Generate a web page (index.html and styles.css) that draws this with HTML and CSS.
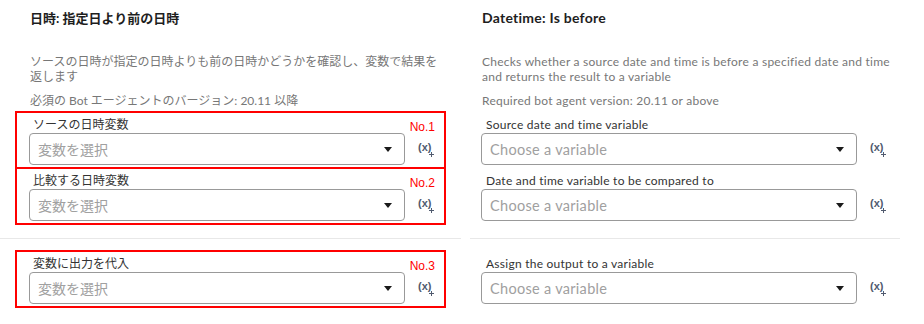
FILE: index.html
```html
<!DOCTYPE html>
<html lang="ja">
<head>
    <meta charset="UTF-8">
    <meta name="viewport" content="width=device-width, initial-scale=1.0">
    <title>Datetime: Is before</title>
    <link rel="stylesheet" href="styles.css">
</head>
<body>
    <div class="page">
        <!-- Japanese panel, annotated with red boxes -->
        <section class="panel panel-ja" lang="ja">
            <div class="panel-head">
                <h2 class="panel-title">日時: 指定日より前の日時</h2>
                <p class="panel-desc">ソースの日時が指定の日時よりも前の日時かどうかを確認し、変数で結果を返します</p>
                <p class="panel-note">必須の Bot エージェントのバージョン: 20.11 以降</p>
            </div>

            <div class="field field-marked">
                <span class="field-tag">No.1</span>
                <label class="field-label">ソースの日時変数</label>
                <div class="field-row">
                    <div class="select"><span class="select-placeholder">変数を選択</span><span class="select-caret"></span></div>
                    <span class="var-icon">(x)<span class="var-plus"></span></span>
                </div>
            </div>
            <div class="field field-marked field-joined">
                <span class="field-tag">No.2</span>
                <label class="field-label">比較する日時変数</label>
                <div class="field-row">
                    <div class="select"><span class="select-placeholder">変数を選択</span><span class="select-caret"></span></div>
                    <span class="var-icon">(x)<span class="var-plus"></span></span>
                </div>
            </div>

            <hr class="divider">

            <div class="field field-marked">
                <span class="field-tag">No.3</span>
                <label class="field-label">変数に出力を代入</label>
                <div class="field-row">
                    <div class="select"><span class="select-placeholder">変数を選択</span><span class="select-caret"></span></div>
                    <span class="var-icon">(x)<span class="var-plus"></span></span>
                </div>
            </div>
        </section>

        <!-- English panel -->
        <section class="panel panel-en" lang="en">
            <div class="panel-head">
                <h2 class="panel-title">Datetime: Is before</h2>
                <p class="panel-desc">Checks whether a source date and time is before a specified date and time and returns the result to a variable</p>
                <p class="panel-note">Required bot agent version: 20.11 or above</p>
            </div>

            <div class="field">
                <label class="field-label">Source date and time variable</label>
                <div class="field-row">
                    <div class="select"><span class="select-placeholder">Choose a variable</span><span class="select-caret"></span></div>
                    <span class="var-icon">(x)<span class="var-plus"></span></span>
                </div>
            </div>
            <div class="field field-joined">
                <label class="field-label">Date and time variable to be compared to</label>
                <div class="field-row">
                    <div class="select"><span class="select-placeholder">Choose a variable</span><span class="select-caret"></span></div>
                    <span class="var-icon">(x)<span class="var-plus"></span></span>
                </div>
            </div>

            <hr class="divider">

            <div class="field">
                <label class="field-label">Assign the output to a variable</label>
                <div class="field-row">
                    <div class="select"><span class="select-placeholder">Choose a variable</span><span class="select-caret"></span></div>
                    <span class="var-icon">(x)<span class="var-plus"></span></span>
                </div>
            </div>
        </section>
    </div>
</body>
</html>
```

FILE: styles.css
```css
body {
    margin: 0;
    background-color: #fff;
    font-family: Lato, "Noto Sans CJK JP", sans-serif;
    color: #333;
}
.page {
    display: flex;
}
.panel {
    width: 462px;
    box-sizing: border-box;
}
.panel-ja {
    padding-left: 15px;
}
.panel-en {
    padding-left: 5px;
}
.panel-en .panel-title,
.panel-en .panel-desc,
.panel-en .panel-note,
.panel-en .field-label {
    letter-spacing: 0.25px;
}
.panel-head {
    width: 431px;
    box-sizing: border-box;
    padding-left: 15px;
}
.panel-title {
    margin: 0;
    padding-top: 8px;
    font-size: 14px;
    line-height: 20px;
    font-weight: bold;
    color: #1e1e1e;
}
.panel-ja .panel-title {
    font-size: 13px;
}
.panel-desc {
    margin: 26px 0 0;
    font-size: 12px;
    line-height: 15px;
    color: #777;
}
.panel-note {
    margin: 9px 0 0;
    font-size: 12px;
    line-height: 15px;
    color: #777;
}
/* field groups */
.field {
    position: relative;
    width: 431px;
    box-sizing: border-box;
    margin-top: 3px;
    padding: 0 12px 2px;
    border: 2px solid transparent;
}
.field-marked {
    border-color: #ff0000;
}
.field-joined {
    margin-top: -2px;
}
.field-tag {
    position: absolute;
    top: 7px;
    right: 9px;
    font-family: "Liberation Sans", Arial, sans-serif;
    font-size: 12px;
    line-height: 14px;
    color: #ff0000;
}
.field-label {
    display: block;
    padding: 4px 0 0 4px;
    font-size: 12px;
    line-height: 16px;
    color: #333;
}
.panel-en .field-label {
    padding-left: 5px;
}
.field-row {
    display: flex;
    align-items: center;
    gap: 13px;
}
.select {
    flex: 1;
    height: 32px;
    box-sizing: border-box;
    border: 1px solid #999;
    border-radius: 4px;
    padding: 0 12px 0 8px;
    display: flex;
    align-items: center;
    justify-content: space-between;
}
.select-placeholder {
    font-size: 14px;
    color: #a0a0a0;
}
.panel-en .select-placeholder {
    font-size: 14.5px;
    letter-spacing: 0.3px;
}
.select-caret {
    width: 0;
    height: 0;
    border-left: 4px solid transparent;
    border-right: 4px solid transparent;
    border-top: 5px solid #1a1a1a;
}
/* (x) variable button with a small plus */
.var-icon {
    position: relative;
    width: 14px;
    font-family: "Liberation Sans", Arial, sans-serif;
    font-size: 11px;
    font-weight: bold;
    color: #505a6e;
    line-height: 14px;
    margin-top: -4px;
}
.var-plus {
    position: absolute;
    left: 11px;
    top: 12px;
    width: 5px;
    height: 5px;
}
.var-plus::before,
.var-plus::after {
    content: "";
    position: absolute;
    background-color: #505a6e;
}
.var-plus::before {
    left: 0;
    top: 2px;
    width: 5px;
    height: 1px;
}
.var-plus::after {
    left: 2px;
    top: 0;
    width: 1px;
    height: 5px;
}
.divider {
    border: 0;
    border-top: 1px solid #e8e8e8;
    height: 0;
}
.panel-ja .divider {
    margin: 13px 1px 11px -15px;
}
.panel-en .divider {
    margin: 13px 0 11px 3px;
    width: 430px;
}
```
